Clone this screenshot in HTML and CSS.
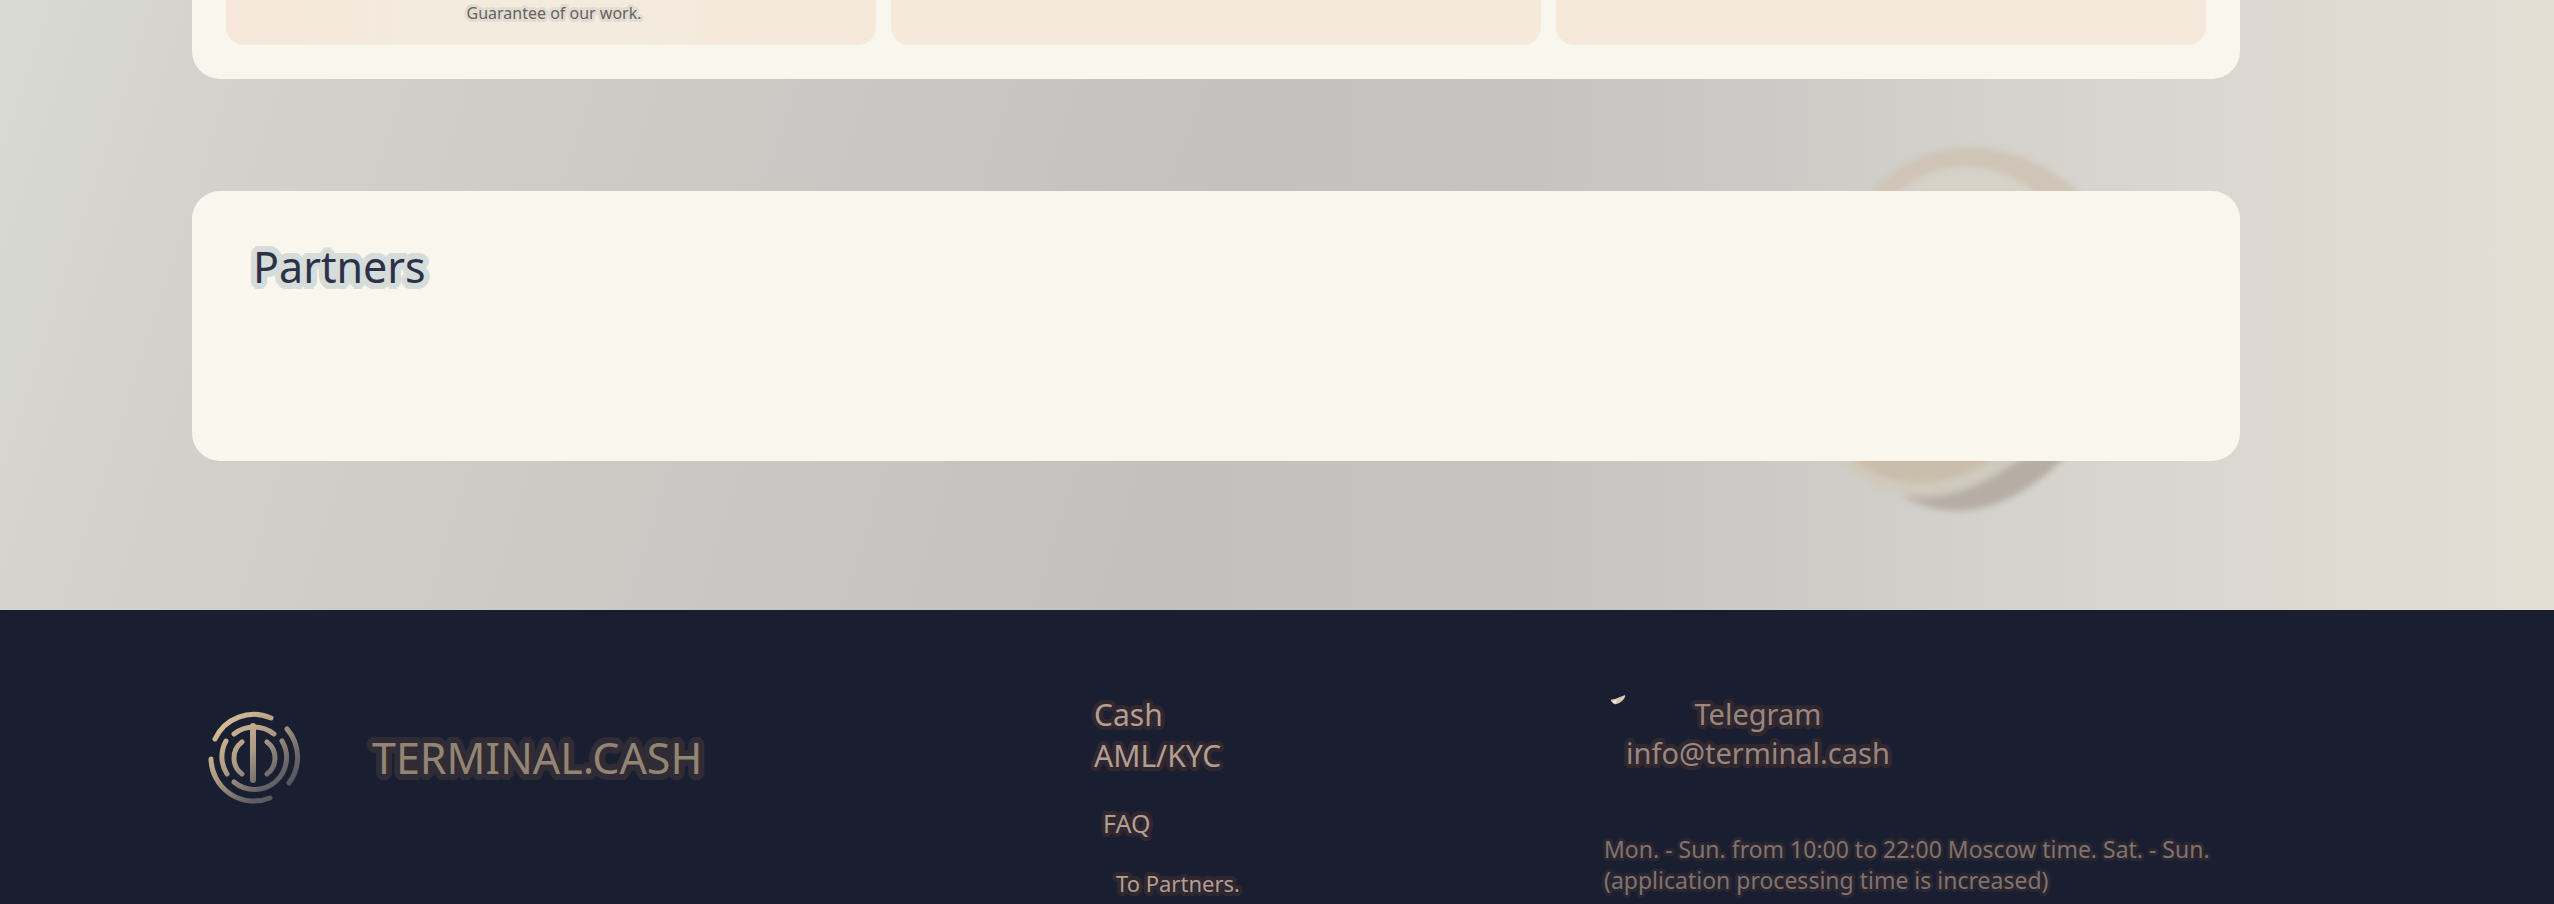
FILE: index.html
```html
<!DOCTYPE html>
<html lang="en">
<head>
<meta charset="utf-8">
<title>Terminal.cash</title>
<link rel="stylesheet" href="styles.css">
</head>
<body>
<main class="main">
  <svg class="coin" viewBox="0 0 280 380" aria-hidden="true">
    <defs><filter id="soft" x="-10%" y="-10%" width="120%" height="120%"><feGaussianBlur stdDeviation="3"/></filter></defs>
    <g filter="url(#soft)">
      <path d="M40 60C90 -10 190 -15 265 60Z" fill="#cfc4b5"/>
      <path d="M65 60C105 13 180 13 220 60Z" fill="#d6d2c8"/>
      <path d="M60 340C110 385 185 380 250 305L100 305Z" fill="#b6aea5"/>
      <path d="M5 310C60 370 130 370 205 310Z" fill="#d0cabd"/>
      <path d="M20 310C65 351 120 351 180 310Z" fill="#c9bdac"/>
    </g>
  </svg>
  <section class="card benefits">
    <article class="benefit"><p class="benefit-text halo">Guarantee of our work.</p></article>
    <article class="benefit"></article>
    <article class="benefit"></article>
  </section>
  <section class="card partners">
    <h2 class="heading halo">Partners</h2>
  </section>
</main>
<footer class="footer">
  <div class="brand">
    <svg class="logo" viewBox="0 0 94 94" aria-hidden="true">
      <defs><linearGradient id="gold" gradientUnits="userSpaceOnUse" x1="10" y1="10" x2="75" y2="85"><stop offset="0" stop-color="#dcc09a"/><stop offset=".45" stop-color="#ac9a84"/><stop offset=".8" stop-color="#66636a"/><stop offset="1" stop-color="#55545e"/></linearGradient></defs>
      <g fill="none" stroke="url(#gold)" stroke-width="5" stroke-linecap="round">
        <path d="M8 28A43 43 0 0 1 64 7M4 48A43 43 0 0 0 63 87M80 18A43 43 0 0 1 82 72"/>
        <path d="M27 23A32 32 0 0 1 67 23M19 30A32 32 0 0 0 20 63M27 71A32 32 0 0 0 75 30"/>
        <path d="M35 31A20 20 0 0 0 35 63M60 31A20 20 0 0 1 60 63"/>
        <path d="M46 15V69" stroke-width="6"/>
      </g>
    </svg>
    <span class="brand-name halo">TERMINAL.CASH</span>
  </div>
  <nav class="links">
    <a class="link halo" href="#">Cash</a>
    <a class="link halo" href="#">AML/KYC</a>
    <a class="link link-faq halo" href="#">FAQ</a>
    <a class="link link-partners halo" href="#">To Partners.</a>
  </nav>
  <div class="contacts">
    <div class="contact-list">
      <svg class="plane" viewBox="0 0 20 14" aria-hidden="true"><path d="M3 8Q2 6 7 6L17 2Q18 4 14 8Q10 12 6 11Z" fill="#d9c6b4"/><path d="M5 8L9 7 8 10 5 10Z" fill="#f0e8e2"/></svg>
      <a class="contact halo" href="#">Telegram</a>
      <a class="contact halo" href="#">info@terminal.cash</a>
    </div>
    <p class="hours halo">Mon. - Sun. from 10:00 to 22:00 Moscow time. Sat. - Sun. (application processing time is increased)</p>
  </div>
</footer>
</body>
</html>
```
FILE: styles.css
```css
* { box-sizing: border-box; }

body {
  margin: 0;
  font-family: "Noto Sans", sans-serif;
  background: #191f31;
}

/* Solid round outline behind the text */
.halo {
  --r: 3px;
  --d: calc(var(--r) * 0.7);
  --m: calc(var(--r) * 0.92);
  --n: calc(var(--r) * 0.38);
  text-shadow:
    var(--r) 0 var(--h), calc(var(--r) * -1) 0 var(--h),
    0 var(--r) var(--h), 0 calc(var(--r) * -1) var(--h),
    var(--d) var(--d) var(--h), calc(var(--d) * -1) var(--d) var(--h),
    var(--d) calc(var(--d) * -1) var(--h), calc(var(--d) * -1) calc(var(--d) * -1) var(--h),
    var(--m) var(--n) var(--h), calc(var(--m) * -1) var(--n) var(--h),
    var(--m) calc(var(--n) * -1) var(--h), calc(var(--m) * -1) calc(var(--n) * -1) var(--h),
    var(--n) var(--m) var(--h), calc(var(--n) * -1) var(--m) var(--h),
    var(--n) calc(var(--m) * -1) var(--h), calc(var(--n) * -1) calc(var(--m) * -1) var(--h);
}

.main {
  position: relative;
  overflow: hidden;
  display: flex;
  flex-direction: column;
  gap: 112px;
  padding: 0 314px 149px 192px;
  background:
    linear-gradient(90deg, rgba(196, 195, 192, 0) 46%, #c5c4c1 60%, #cccac6 69%, #d3d1cb 77%, #dad7d0 86%, #dfdad2 92%, #e4dfd5 100%),
    linear-gradient(108deg, #dadad5 0%, #d2d1cc 10%, #cbcac5 26%, #c6c5c2 39%, #c2c1bf 48%, #c2c1bf 100%);
}

.coin {
  position: absolute;
  left: 1824px;
  top: 142px;
  width: 280px;
  height: 380px;
  overflow: visible;
}

.card {
  position: relative;
  border-radius: 28px;
  background: #f9f6ed;
}

.benefits {
  display: grid;
  grid-template-columns: repeat(3, 1fr);
  gap: 15px;
  padding: 0 34px 34px;
  border-top-left-radius: 0;
  border-top-right-radius: 0;
}

.benefit {
  min-height: 45px;
  border-radius: 0 0 18px 18px;
  background: #f5e9db;
  text-align: center;
}

.benefit:first-child {
  background: linear-gradient(90deg, #f5e8da 10%, #f3ebde 28%, #f3ebde 60%, #f5e9db 84%);
}

.benefit-text {
  --h: #e2ddd0;
  margin: 0;
  padding-left: 6px;
  font-size: 16px;
  line-height: 26px;
  color: #66625f;
}

.partners {
  min-height: 270px;
  padding: 46px 61px;
}

.heading {
  --h: #d5dcd9;
  --r: 6px;
  margin: 0;
  font-size: 43px;
  font-weight: 400;
  line-height: 60px;
  color: #2d3147;
}

.footer {
  --h: #30272f;
  display: grid;
  grid-template-columns: 887px 510px 1fr;
  min-height: 294px;
  padding: 84px 314px 0 207px;
  background: #191f31;
}

.brand {
  display: flex;
  align-items: center;
  align-self: start;
  gap: 71px;
  padding-top: 17px;
}

.logo { width: 94px; height: 94px; }

.brand-name {
  --h: #2f2c35;
  --r: 6px;
  font-size: 43px;
  line-height: 60px;
  color: #948473;
}

.links {
  display: flex;
  flex-direction: column;
  align-items: flex-start;
}

.link {
  --r: 4px;
  font-size: 30px;
  line-height: 41px;
  color: #b29e93;
  text-decoration: none;
}

.link-faq {
  margin: 30px 0 0 9px;
  font-size: 25px;
  line-height: 34px;
}

.link-partners {
  margin: 28px 0 0 22px;
  font-size: 22px;
  line-height: 30px;
}

.contacts { display: flex; flex-direction: column; gap: 62px; }

.contact-list {
  position: relative;
  display: flex;
  flex-direction: column;
  align-items: center;
  align-self: flex-start;
  padding-left: 22px;
}

.plane {
  position: absolute;
  left: 4px;
  top: -1px;
  width: 20px;
  height: 14px;
}

.contact {
  --r: 4px;
  font-size: 29px;
  line-height: 39px;
  color: #988781;
  text-decoration: none;
}

.hours {
  --h: #2a2630;
  margin: 0;
  font-size: 23px;
  line-height: 31px;
  color: #80736f;
}
```
